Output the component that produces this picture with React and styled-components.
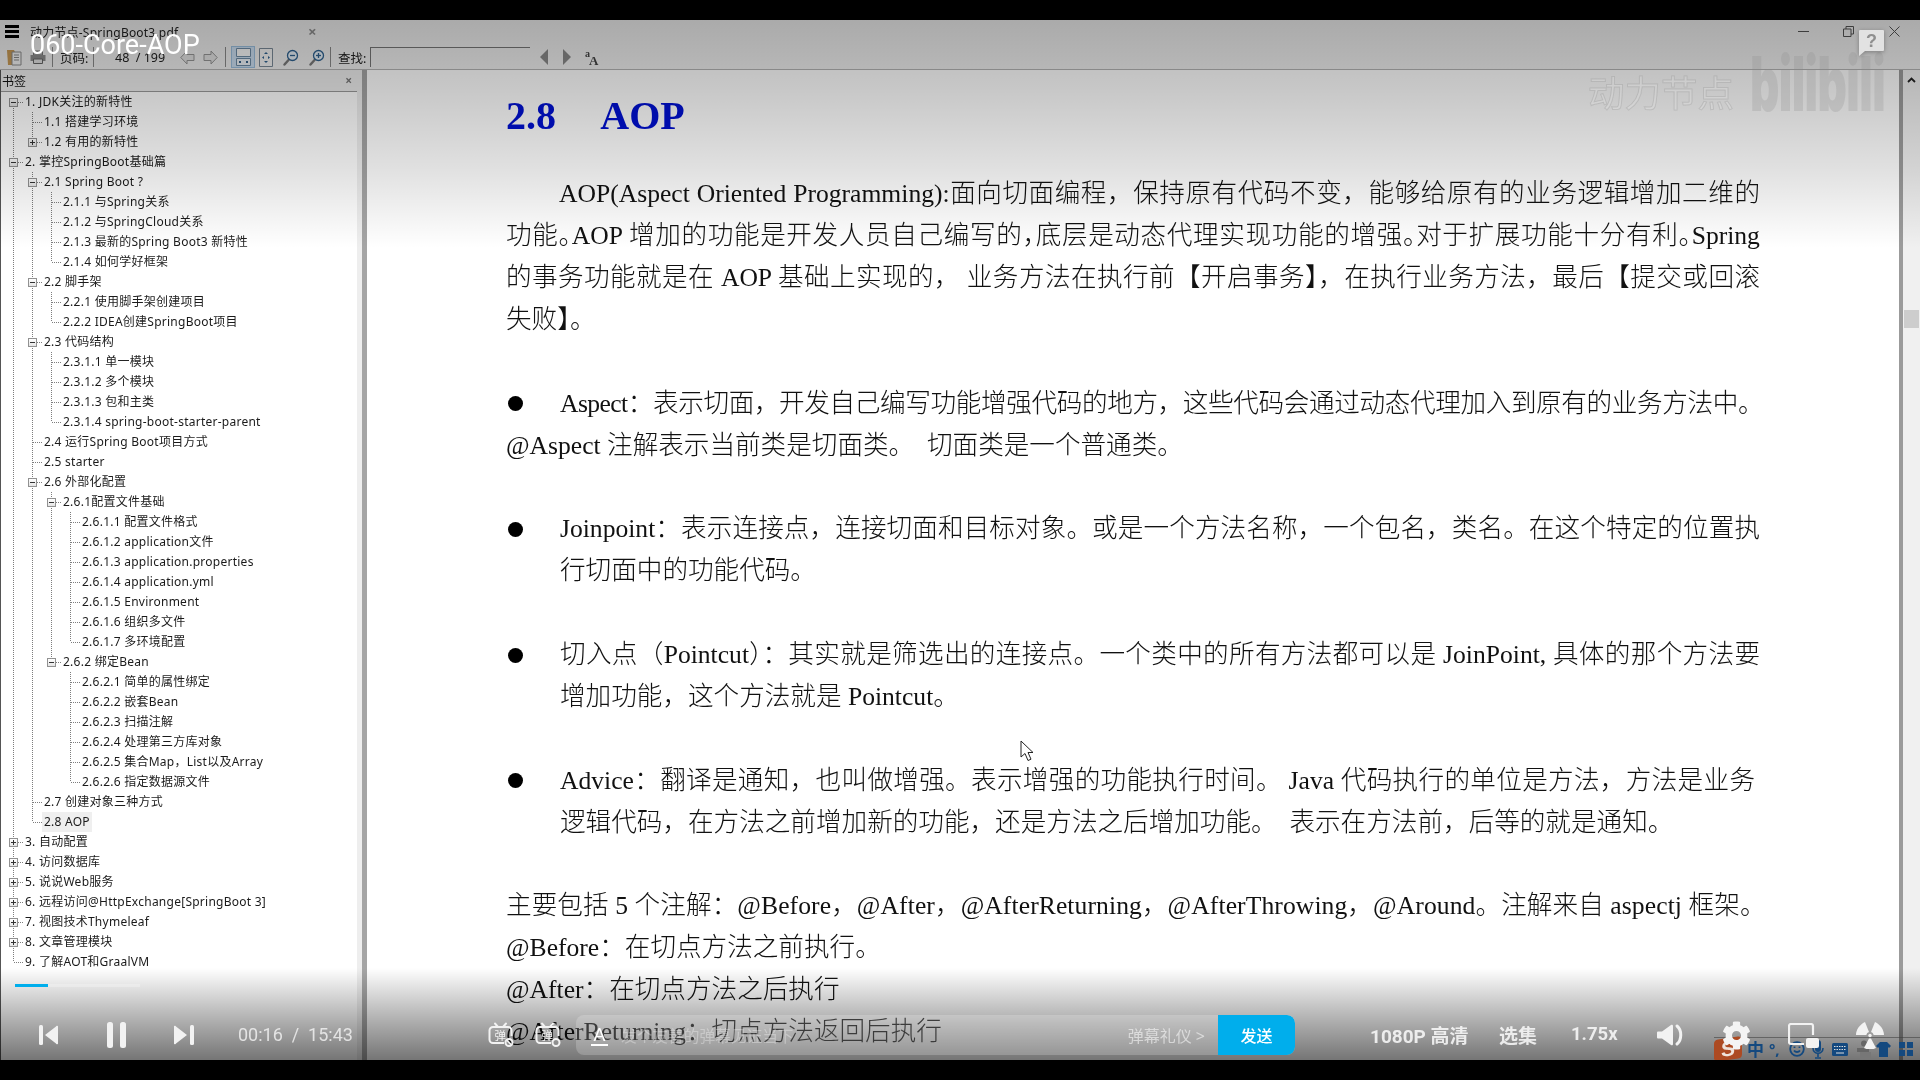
import React from 'react';
import styled, { createGlobalStyle } from 'styled-components';
import { FaCog } from 'react-icons/fa';

const Global = createGlobalStyle`
  html, body { margin: 0; padding: 0; background: #000; overflow: hidden; }
  * { box-sizing: border-box; }
`;

const UI_FONT = `"Noto Sans", "Noto Sans CJK SC", sans-serif`;
const DOC_FONT = `"Liberation Serif", "Noto Sans CJK SC", serif`;

const Screen = styled.div`
  width: 1920px; height: 1080px; background: #000; padding: 20px 0;
  display: flex; flex-direction: column;
`;
const Window = styled.div`
  position: relative; flex: 1; min-height: 0; display: flex; flex-direction: column;
  background: #f0f0f0; overflow: hidden; color: #111; font-family: ${UI_FONT};
  filter: blur(0.35px);
`;

/* title bar */
const TitleBar = styled.div`
  height: 25px; display: flex; align-items: center; padding: 0 20px 2px 5px; font-size: 12px; letter-spacing: .2px;
`;
const Burger = styled.div`
  width: 14px; height: 13px;
  background: repeating-linear-gradient(to bottom, #000 0 3px, transparent 3px 5px);
`;
const TabTitle = styled.span`margin-left: 11px; width: 278px; color: #222;`;
const TabClose = styled.span`font-size: 15px; font-weight: 700; color: #8e8e8e; line-height: 1;`;
const WinControls = styled.div`margin-left: auto; display: flex; align-items: center;`;
const WinGlyph = styled.svg`margin-left: ${p => p.$ml}px; display: block;`;

/* tool bar */
const ToolBar = styled.div`
  height: 25px; display: flex; align-items: center; padding-left: 7px; font-size: 12.5px;
  border-bottom: 1px solid #b4b4b4;
`;
const ToolIcon = styled.svg`margin-left: ${p => p.$ml || 0}px; flex: none; display: block;`;
const ToolSep = styled.span`width: 1px; height: 20px; background: #8a8a8a; margin-left: ${p => p.$ml}px; flex: none;`;
const ToolText = styled.span`margin-left: ${p => p.$ml}px; white-space: nowrap; flex: none; width: ${p => p.$w}px; color: #222;`;
const ActiveTool = styled.span`
  margin-left: 5px; width: 24px; height: 22px; background: #cde0f3; border: 1px solid #9cc0e0; display: flex; align-items: center; justify-content: center; flex: none;
`;
const SearchBox = styled.span`
  margin-left: 5px; width: 160px; height: 20px; background: #f0f0f0; border-top: 1px solid #777; border-left: 1px solid #777; flex: none;
`;
const FontToggle = styled.span`
  margin-left: 14px; font-family: "Liberation Serif", serif; font-weight: 700; font-size: 12px; line-height: 7px; width: 14px; flex: none; color: #444;
  & > b { display: block; font-size: 10px; }
  & > i { display: block; font-style: normal; margin-left: 4px; font-size: 13px; }
`;

/* main */
const Main = styled.div`flex: 1; min-height: 0; display: flex;`;
const Sidebar = styled.aside`
  width: 362px; flex: none; display: flex; flex-direction: column; border-left: 1px solid #555; padding-right: 5px; background: #eee;
`;
const SideHead = styled.div`
  height: 22px; flex: none; display: flex; align-items: center; justify-content: space-between; padding: 0 5px 0 1px; font-size: 12px;
  border-bottom: 1px solid #9a9a9a;
`;
const SideClose = styled.span`font-size: 12px; font-weight: 700; color: #777; line-height: 1;`;
const Tree = styled.div`flex: 1; min-height: 0; background: #fff; padding: 0 0 0 3px; overflow: hidden;`;
const TreeRow = styled.div`height: 20px; display: flex; font-size: 12px; line-height: 20px; letter-spacing: .25px; white-space: nowrap; color: #1a1a1a;`;
const DOT = '#7d7d7d';
const Guide = styled.div`
  position: relative; width: 19px; height: 20px; flex: none; background-repeat: no-repeat;
  background-image:
    ${p => p.$top ? `repeating-linear-gradient(to bottom, ${DOT} 0 1px, transparent 1px 2px)` : 'none'},
    ${p => p.$bottom ? `repeating-linear-gradient(to bottom, ${DOT} 0 1px, transparent 1px 2px)` : 'none'},
    ${p => p.$branch ? `repeating-linear-gradient(to right, ${DOT} 0 1px, transparent 1px 2px)` : 'none'};
  background-size: 1px 10px, 1px 10px, 9px 1px;
  background-position: 9px 0, 9px 10px, 10px 10px;
`;
const Expander = styled.span`
  position: absolute; left: 5px; top: 6px; width: 9px; height: 9px; border: 1px solid #919191;
  background: linear-gradient(#fff, #e4e4e4);
  &::before { content: ''; position: absolute; left: 1px; top: 3px; width: 5px; height: 1px; background: #333; }
  &::after { content: ''; display: ${p => p.$plus ? 'block' : 'none'}; position: absolute; left: 3px; top: 1px; width: 1px; height: 5px; background: #333; }
`;
const TreeLabel = styled.span`
  margin-left: 0; padding: 0 2px; background: ${p => p.$selected ? '#efefef' : 'transparent'};
`;
const Splitter = styled.div`width: 5px; flex: none; background: #a5a5a5;`;
const Doc = styled.main`
  flex: 1; min-width: 0; background: #fff; overflow: hidden; padding: 19px 139px 0 139px;
  font-family: ${DOC_FONT}; font-size: 25.6px; font-weight: 300; line-height: 42px; color: #111;
`;
const Heading = styled.h2`
  margin: 0 0 30px; font: 700 40px/54px "Liberation Serif", serif; word-spacing: 5.5px; color: #0010d2; white-space: pre;
`;
const Para = styled.section`margin-bottom: 41.7px;`;
const Line = styled.div`
  padding-left: ${p => p.$indent || 0}px; height: 42px;
  text-align: ${p => p.$fill ? 'justify' : 'left'};
  text-align-last: ${p => p.$fill ? 'justify' : 'left'};
  letter-spacing: ${p => p.$ls || 0}px;
  white-space: ${p => p.$fill ? 'normal' : 'pre'};
`;
const BulletRow = styled.div`display: flex; align-items: center; height: 42px; margin-right: ${p => p.$over || 0}px;`;
const Dot = styled.span`width: 15px; height: 15px; border-radius: 50%; background: #000; flex: none; margin: 0 37px 0 2px;`;
const BulletText = styled.div`flex: 1; min-width: 0; text-align: justify; text-align-last: justify; letter-spacing: ${p => p.$ls || 0}px;`;
const NarrowMark = styled.span`letter-spacing: -13px;`;
const ScrollDivider = styled.div`width: 4px; flex: none; background: #9b9b9b;`;
const ScrollTrack = styled.div`width: 17px; flex: none; background: #f0f0f0; display: flex; flex-direction: column; align-items: center; padding-top: 7px;`;
const ScrollThumb = styled.div`width: 15px; height: 18px; background: #cdcdcd; margin-top: 227px;`;

/* overlays */
const TopShade = styled.div`
  position: absolute; left: 0; right: 0; top: 0; height: 228px; pointer-events: none;
  background: linear-gradient(to bottom, rgba(0,0,0,.29), rgba(0,0,0,.22) 30%, rgba(0,0,0,.12) 65%, rgba(0,0,0,0));
`;
const BottomShade = styled.div`
  position: absolute; left: 0; right: 0; bottom: 0; height: 92px; pointer-events: none;
  background: linear-gradient(to top, rgba(0,0,0,.54), rgba(0,0,0,.3) 45%, rgba(0,0,0,0));
`;
const VideoTitle = styled.div`
  position: absolute; left: 30px; top: 9px; font: 400 27px/32px Roboto, sans-serif; color: #fff; white-space: nowrap;
`;
const Watermark = styled.div`
  position: absolute; left: 1588px; top: 52px; font-size: 36.5px; line-height: 42px; white-space: nowrap; color: rgba(255,255,255,.14);
  -webkit-text-stroke: 1px rgba(120,120,120,.22); font-weight: 400;
`;
const WatermarkLogo = styled.div`
  position: absolute; left: 1750px; top: 25px; font: 900 76px/76px Inter, sans-serif; letter-spacing: -1px; color: rgba(140,140,140,.24); white-space: nowrap;
  transform: scaleX(.6); transform-origin: left center;
`;
const HelpBubble = styled.svg`position: absolute; left: 1858px; top: 9px; filter: drop-shadow(0 1px 2px rgba(0,0,0,.3));`;
const Pointer = styled.svg`position: absolute; left: 1020px; top: 720px;`;

/* player controls */
const Progress = styled.div`
  position: absolute; left: 15px; top: 964px; width: 125px; height: 3px; background: rgba(255,255,255,.25);
`;
const ProgressFill = styled.div`height: 100%; background: #00aeec;`;
const Controls = styled.div`
  position: absolute; left: 0; right: 0; bottom: 5px; height: 40px; display: flex; align-items: center; padding-left: 39px; color: #fff;
`;
const CtlIcon = styled.svg`margin-left: ${p => p.$ml || 0}px; flex: none; display: block; color: #f2f2f2;`;
const CtlGear = styled.span`margin-left: ${p => p.$ml}px; flex: none; display: flex; color: #f4f4f4;`;
const TimeText = styled.span`margin: -2px 0 0 44px; width: 111px; flex: none; white-space: nowrap; font: 400 18px Roboto, sans-serif; color: rgba(255,255,255,.72);`;
const CtlText = styled.span`
  margin: -2px 0 0 ${p => p.$ml}px; width: ${p => p.$w}px; flex: none; white-space: nowrap; font-size: ${p => p.$size || 18}px; font-weight: 700; color: rgba(255,255,255,.82); font-family: Roboto, "Noto Sans CJK SC", sans-serif;
`;
const DanmakuBar = styled.div`
  margin-left: 15px; width: 719px; height: 40px; flex: none; display: flex; align-items: center; border-radius: 8px; background: rgba(255,255,255,.2); overflow: hidden;
`;
const FontA = styled.span`
  margin-left: 15px; width: 17px; font: 400 19px/19px Roboto, sans-serif; color: #fff; border-bottom: 2px solid #fff; text-align: center; flex: none;
`;
const Placeholder = styled.span`margin-left: 13px; font-size: 15.7px; color: rgba(255,255,255,.32); white-space: nowrap;`;
const Etiquette = styled.span`margin-left: auto; font-size: 16px; color: rgba(255,255,255,.55); white-space: nowrap; margin-right: 13px;`;
const SendButton = styled.span`
  width: 77px; height: 40px; flex: none; background: #00aeec; border-radius: 0 8px 8px 0; display: flex; align-items: center; justify-content: center; color: #fff; font-size: 16px; font-weight: 500;
`;
const Tray = styled.div`
  position: absolute; right: 0; bottom: 0; width: 206px; height: 23px; border-top: 1px solid rgba(60,60,60,.55); display: flex; align-items: center; color: #14497f;
`;
const TrayLogo = styled.span`
  position: absolute; left: 0; bottom: 0; width: 28px; height: 22px; background: #ad4a22; border-radius: 4px; transform: skewY(-8deg); color: #efe2da;
  font: 900 21px/22px "Liberation Sans", sans-serif; text-align: center;
`;
const TrayGlyph = styled.span`margin-left: ${p => p.$ml}px; font-size: ${p => p.$size || 16}px; font-weight: 700; line-height: 1; flex: none;`;
const TrayIcon = styled.svg`margin-left: ${p => p.$ml}px; flex: none; display: block;`;

const tree = [
  { t: '1. JDK关注的新特性', c: [{ t: '1.1 搭建学习环境' }, { t: '1.2 有用的新特性', plus: true }] },
  { t: '2. 掌控SpringBoot基础篇', c: [
    { t: '2.1 Spring Boot ?', c: [{ t: '2.1.1 与Spring关系' }, { t: '2.1.2 与SpringCloud关系' }, { t: '2.1.3 最新的Spring Boot3 新特性' }, { t: '2.1.4 如何学好框架' }] },
    { t: '2.2 脚手架', c: [{ t: '2.2.1 使用脚手架创建项目' }, { t: '2.2.2 IDEA创建SpringBoot项目' }] },
    { t: '2.3 代码结构', c: [{ t: '2.3.1.1 单一模块' }, { t: '2.3.1.2 多个模块' }, { t: '2.3.1.3 包和主类' }, { t: '2.3.1.4 spring-boot-starter-parent' }] },
    { t: '2.4 运行Spring Boot项目方式' },
    { t: '2.5 starter' },
    { t: '2.6 外部化配置', c: [
      { t: '2.6.1配置文件基础', c: [{ t: '2.6.1.1 配置文件格式' }, { t: '2.6.1.2 application文件' }, { t: '2.6.1.3 application.properties' }, { t: '2.6.1.4 application.yml' }, { t: '2.6.1.5 Environment' }, { t: '2.6.1.6 组织多文件' }, { t: '2.6.1.7 多环境配置' }] },
      { t: '2.6.2 绑定Bean', c: [{ t: '2.6.2.1 简单的属性绑定' }, { t: '2.6.2.2 嵌套Bean' }, { t: '2.6.2.3 扫描注解' }, { t: '2.6.2.4 处理第三方库对象' }, { t: '2.6.2.5 集合Map，List以及Array' }, { t: '2.6.2.6 指定数据源文件' }] },
    ] },
    { t: '2.7 创建对象三种方式' },
    { t: '2.8 AOP', selected: true },
  ] },
  { t: '3. 自动配置', plus: true }, { t: '4. 访问数据库', plus: true }, { t: '5. 说说Web服务', plus: true },
  { t: '6. 远程访问@HttpExchange[SpringBoot 3]', plus: true }, { t: '7. 视图技术Thymeleaf', plus: true },
  { t: '8. 文章管理模块', plus: true }, { t: '9. 了解AOT和GraalVM' },
];

const flatten = (nodes, trail = [], root = true) => nodes.flatMap((n, i) => {
  const last = i === nodes.length - 1;
  const row = { ...n, trail, last, first: root && i === 0 };
  return [row, ...(n.c ? flatten(n.c, [...trail, !last], false) : [])];
});

const TreeView = () => (
  <Tree>
    {flatten(tree).map(r => (
      <TreeRow key={r.t}>
        {r.trail.map((more, i) => <Guide key={i} $top={more} $bottom={more} />)}
        <Guide $top={!r.first} $bottom={!r.last} $branch>
          {(r.c || r.plus) && <Expander $plus={r.plus} />}
        </Guide>
        <TreeLabel $selected={r.selected}>{r.t}</TreeLabel>
      </TreeRow>
    ))}
  </Tree>
);

const Magnifier = ({ ml, plus }) => (
  <ToolIcon $ml={ml} width="16" height="17" viewBox="0 0 16 17">
    <path d="M6 10.5 1.5 15.5" stroke="#7a7a7a" strokeWidth="2.4" strokeLinecap="round" />
    <circle cx="9.5" cy="6.5" r="5" fill="#e8f1f8" stroke="#2f6290" strokeWidth="1.3" />
    <path d="M7 6.5h5" stroke="#2f6290" strokeWidth="1.3" />
    {plus && <path d="M9.5 4v5" stroke="#2f6290" strokeWidth="1.3" />}
  </ToolIcon>
);

const Danmaku = ({ ml, off }) => (
  <CtlIcon $ml={ml} width="26" height="26" viewBox="0 0 26 26" fill="none" stroke="currentColor">
    <path d="M7 1.5 10 5M18 1.5 15 5" strokeWidth="2" strokeLinecap="round" />
    <path d="M16 21H5a3.500 3.500 0 0 1-3.500-3.500v-9A3.500 3.500 0 0 1 5 5h15a3.500 3.500 0 0 1 3.500 3.500V14" strokeWidth="2" />
    <text x="6.500" y="17.500" fontSize="11.500" fill="currentColor" stroke="none" fontFamily="Noto Sans CJK SC">弹</text>
    <circle cx="21" cy="20.500" r="3.500" strokeWidth="2" />
    {off && <path d="m18.800 18.300 4.400 4.400" strokeWidth="1.600" />}
  </CtlIcon>
);

const App = () => (
  <Screen>
    <Global />
    <Window>
      <TitleBar>
        <Burger />
        <TabTitle>动力节点-SpringBoot3.pdf</TabTitle>
        <TabClose>×</TabClose>
        <WinControls>
          <WinGlyph $ml={0} width="11" height="11" viewBox="0 0 11 11"><path d="M0 5.500h11" stroke="#555" /></WinGlyph>
          <WinGlyph $ml={34} width="11" height="11" viewBox="0 0 11 11" fill="none"><path d="M.5 3h7.500v7.500H.5zM3 3V.5h7.500V8H8" stroke="#555" /></WinGlyph>
          <WinGlyph $ml={35} width="11" height="11" viewBox="0 0 11 11"><path d="m.5.500 10 10M10.500.500l-10 10" stroke="#555" /></WinGlyph>
        </WinControls>
      </TitleBar>
      <ToolBar>
        <ToolIcon width="15" height="17" viewBox="0 0 15 17">
          <path d="M0 1h7l1 2v13H1z" fill="#c89a55" />
          <path d="M5 3h9v13H5z" fill="#f2f2f2" stroke="#8a8a8a" />
          <path d="M7 6h5M7 8.500h5M7 11h5" stroke="#888" />
        </ToolIcon>
        <ToolIcon $ml={8} width="16" height="14" viewBox="0 0 16 14">
          <path d="M3.500 1h9v4h-9z" fill="#bbb" stroke="#777" />
          <path d="M.5 5h15v6h-15z" fill="#8c8c8c" />
          <path d="M3.500 9h9v4.500h-9z" fill="#e2e2e2" stroke="#666" />
        </ToolIcon>
        <ToolSep $ml={6} />
        <ToolText $ml={7} $w={33}>页码:</ToolText>
        <ToolSep $ml={0} />
        <ToolText $ml={21} $w={65}>48&nbsp; / 199</ToolText>
        <ToolIcon $ml={0} width="15" height="15" viewBox="0 0 15 15"><path d="M7 1 .8 7.500 7 14v-3.500h7v-6H7z" fill="#e4e4e4" stroke="#969696" /></ToolIcon>
        <ToolIcon $ml={8} width="15" height="15" viewBox="0 0 15 15"><path d="M8 1l6.200 6.500L8 14v-3.500H1v-6h7z" fill="#e4e4e4" stroke="#969696" /></ToolIcon>
        <ToolSep $ml={7} />
        <ActiveTool>
          <svg width="15" height="18" viewBox="0 0 15 18"><path d="M.5.500h14v8H.5z" fill="#fafafa" stroke="#6f8ca6" /><path d="M.5 10.500h14v7H.5z" fill="#eef4fa" stroke="#6f8ca6" /><path d="M3 14h2M10 14h2" stroke="#35618a" strokeWidth="2" /></svg>
        </ActiveTool>
        <ToolIcon $ml={4} width="14" height="19" viewBox="0 0 14 19"><path d="M.5.500h13v18H.5z" fill="#f4f4f4" stroke="#7b8a98" /><path d="M7 4 5 6h4zM7 15 5 13h4zM3 9.500l2-1.500v3zM11 9.500 9 8v3z" fill="#2f6290" /></ToolIcon>
        <Magnifier ml={10} />
        <Magnifier ml={10} plus />
        <ToolSep $ml={5} />
        <ToolText $ml={7} $w={27}>查找:</ToolText>
        <SearchBox />
        <ToolIcon $ml={10} width="8" height="16" viewBox="0 0 8 16"><path d="M8 0v16L0 8z" fill="#8a8a8a" /></ToolIcon>
        <ToolIcon $ml={15} width="8" height="16" viewBox="0 0 8 16"><path d="M0 0v16l8-8z" fill="#8a8a8a" /></ToolIcon>
        <FontToggle><b>a</b><i>A</i></FontToggle>
      </ToolBar>
      <Main>
        <Sidebar>
          <SideHead><span>书签</span><SideClose>×</SideClose></SideHead>
          <TreeView />
        </Sidebar>
        <Splitter />
        <Doc>
          <Heading>2.8   AOP</Heading>
          <Para>
            <Line $indent={53} $fill>AOP(Aspect Oriented Programming):面向切面编程，保持原有代码不变，能够给原有的业务逻辑增加二维的</Line>
            <Line $fill>功能<NarrowMark>。</NarrowMark>AOP 增加的功能是开发人员自己编写的<NarrowMark>，</NarrowMark>底层是动态代理实现功能的增强<NarrowMark>。</NarrowMark>对于扩展功能十分有利<NarrowMark>。</NarrowMark>Spring</Line>
            <Line $fill>的事务功能就是在 AOP 基础上实现的， 业务方法在执行前【开启事务】，在执行业务方法，最后【提交或回滚</Line>
            <Line>失败】。</Line>
          </Para>
          <Para>
            <BulletRow $over={-3}><Dot /><BulletText $ls={-0.6}>Aspect：表示切面，开发自己编写功能增强代码的地方，这些代码会通过动态代理加入到原有的业务方法中。</BulletText></BulletRow>
            <Line>{'@Aspect 注解表示当前类是切面类。  切面类是一个普通类。'}</Line>
          </Para>
          <Para>
            <BulletRow><Dot /><BulletText>Joinpoint：表示连接点，连接切面和目标对象。或是一个方法名称，一个包名，类名。在这个特定的位置执</BulletText></BulletRow>
            <Line $indent={54}>行切面中的功能代码。</Line>
          </Para>
          <Para>
            <BulletRow><Dot /><BulletText>切入点（Pointcut）：其实就是筛选出的连接点。一个类中的所有方法都可以是 JoinPoint, 具体的那个方法要</BulletText></BulletRow>
            <Line $indent={54}>增加功能，这个方法就是 Pointcut。</Line>
          </Para>
          <Para>
            <BulletRow $over={5}><Dot /><BulletText>Advice：翻译是通知，也叫做增强。表示增强的功能执行时间。 Java 代码执行的单位是方法，方法是业务</BulletText></BulletRow>
            <Line $indent={54}>{'逻辑代码，在方法之前增加新的功能，还是方法之后增加功能。  表示在方法前，后等的就是通知。'}</Line>
          </Para>
          <Para>
            <Line $ls={0.09}>主要包括 5 个注解：@Before，@After，@AfterReturning，@AfterThrowing，@Around。注解来自 aspectj 框架。</Line>
            <Line>@Before：在切点方法之前执行。</Line>
            <Line>@After：在切点方法之后执行</Line>
            <Line>@AfterReturning：切点方法返回后执行</Line>
          </Para>
        </Doc>
        <ScrollDivider />
        <ScrollTrack>
          <svg width="9" height="6" viewBox="0 0 9 6"><path d="M1 5 4.500 1.500 8 5" fill="none" stroke="#222" strokeWidth="1.800" /></svg>
          <ScrollThumb />
        </ScrollTrack>
      </Main>

      <TopShade />
      <BottomShade />

      <VideoTitle>060-Core-AOP</VideoTitle>
      <Watermark>动力节点</Watermark>
      <WatermarkLogo>bilibili</WatermarkLogo>
      <HelpBubble width="27" height="28" viewBox="0 0 27 28">
        <path d="M2 1h23a1 1 0 0 1 1 1v19a1 1 0 0 1-1 1H7l-6 5V2a1 1 0 0 1 1-1z" fill="#e2e2e2" />
        <text x="13.500" y="18" textAnchor="middle" fontFamily="Liberation Sans" fontWeight="700" fontSize="18" fill="#8f8f8f">?</text>
      </HelpBubble>
      <Pointer width="14" height="22" viewBox="0 0 14 22">
        <path d="M1 1v16l4-3.500 3 7 3-1.300-3-6.700h5z" fill="#fff" stroke="#222" />
      </Pointer>

      <Progress><ProgressFill style={{ width: `${(33 / 125) * 100}%` }} /></Progress>
      <Tray>
        <TrayLogo>S</TrayLogo>
        <TrayGlyph $ml={33} $size={17}>中</TrayGlyph>
        <TrayGlyph $ml={5} $size={15}>°,</TrayGlyph>
        <TrayIcon $ml={9} width="16" height="18" viewBox="0 0 16 18" fill="none" stroke="currentColor" strokeWidth="1.800"><circle cx="8" cy="9" r="6.800" /><path d="M5 10.500c1.500 2 4.500 2 6 0M5.500 6.500v1.500M10.500 6.500v1.500" /></TrayIcon>
        <TrayIcon $ml={7} width="12" height="19" viewBox="0 0 12 19" fill="currentColor"><rect x="3" width="6" height="12" rx="3" /><path d="M1 8c0 7 10 7 10 0M6 13v4M3 18h6" fill="none" stroke="currentColor" strokeWidth="1.600" /></TrayIcon>
        <TrayIcon $ml={8} width="16" height="13" viewBox="0 0 16 13"><rect width="16" height="13" rx="1.500" fill="currentColor" /><path d="M2 3.500h12M2 6.500h12" stroke="#ddd" strokeDasharray="1.500 1" /><path d="M4 10h8" stroke="#ddd" /></TrayIcon>
        <TrayIcon $ml={7} width="16" height="19" viewBox="0 0 16 19"><circle cx="9" cy="3.500" r="3" fill="#666" /><path d="M2 8h12v4H2z" fill="#666" /><rect x="5" y="12" width="11" height="7" fill="#777" /></TrayIcon>
        <TrayIcon $ml={5} width="15" height="15" viewBox="0 0 15 15"><path d="M4 0h7l4 4-2 2-1-1v10H3V5L2 6 0 4z" fill="currentColor" /></TrayIcon>
        <TrayIcon $ml={8} width="14" height="14" viewBox="0 0 14 14" fill="currentColor"><rect width="6" height="6" /><rect x="8" width="6" height="6" /><rect y="8" width="6" height="6" /><rect x="8" y="8" width="6" height="6" /></TrayIcon>
      </Tray>
      <Controls>
        <CtlIcon width="19" height="20" viewBox="0 0 19 20" fill="currentColor"><rect x="0" y="0" width="4" height="20" rx="1.500" /><path d="M6 10 17 1.500a1 1 0 0 1 2 .5v16a1 1 0 0 1-2 .5z" /></CtlIcon>
        <CtlIcon $ml={49} width="19" height="26" viewBox="0 0 19 26" fill="currentColor"><rect width="6" height="26" rx="2.500" /><rect x="13" width="6" height="26" rx="2.500" /></CtlIcon>
        <CtlIcon $ml={48} width="20" height="20" viewBox="0 0 20 20" fill="currentColor"><path d="M13 10 2 1.500a1 1 0 0 0-2 .5v16a1 1 0 0 0 2 .5z" /><rect x="16" width="4" height="20" rx="1.500" /></CtlIcon>
        <TimeText>00:16&nbsp; /&nbsp; 15:43</TimeText>
        <Danmaku ml={139} off />
        <Danmaku ml={21} />
        <DanmakuBar>
          <FontA>A</FontA>
          <Placeholder>发个友善的弹幕见证当下</Placeholder>
          <Etiquette>弹幕礼仪 &gt;</Etiquette>
          <SendButton>发送</SendButton>
        </DanmakuBar>
        <CtlText $ml={75} $w={129} $size={19}>1080P 高清</CtlText>
        <CtlText $ml={0} $w={72} $size={19}>选集</CtlText>
        <CtlText $ml={0} $w={86} $size={18.5}>1.75x</CtlText>
        <CtlIcon width="26" height="24" viewBox="0 0 26 24" fill="currentColor"><path d="M1 8.500h4L14 2c1-.7 2 0 2 1v18c0 1-1 1.700-2 1l-9-6.500H1a1 1 0 0 1-1-1v-5a1 1 0 0 1 1-1z" /><path d="M20 3c5 4 5 14 0 18" fill="none" stroke="currentColor" strokeWidth="3" strokeLinecap="round" /></CtlIcon>
        <CtlGear $ml={39}><FaCog size={29} /></CtlGear>
        <CtlIcon $ml={37} width="31" height="25" viewBox="0 0 31 25"><path d="M25 12V3a2 2 0 0 0-2-2H3a2 2 0 0 0-2 2v16a2 2 0 0 0 2 2h13" fill="none" stroke="currentColor" strokeWidth="2.200" /><rect x="18" y="15" width="13" height="10" rx="2" fill="currentColor" /></CtlIcon>
        <CtlIcon $ml={36} width="30" height="28" viewBox="0 0 30 28" fill="currentColor"><path d="M10 1 14 11a4 4 0 0 0-2.700 3H1C1 9 4.500 3.500 10 1zM20 1 16 11a4 4 0 0 1 2.700 3H29C29 9 25.500 3.500 20 1zM9 27l5-9.500h2l5 9.500a13 13 0 0 1-12 0z" /><circle cx="15" cy="14.500" r="1.700" /></CtlIcon>
      </Controls>
    </Window>
  </Screen>
);

export default App;
